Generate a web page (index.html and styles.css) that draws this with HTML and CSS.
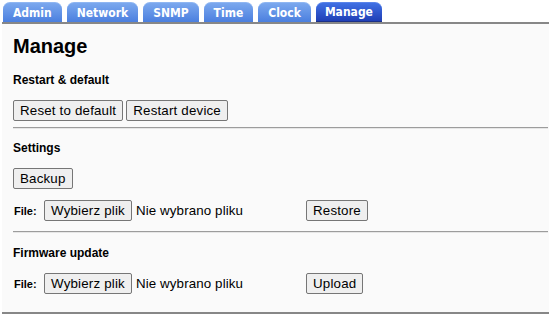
FILE: index.html
```html
<!DOCTYPE html>
<html lang="pl">
<head>
    <meta charset="UTF-8">
    <title>Manage</title>
    <link rel="stylesheet" href="styles.css">
</head>
<body>
    <ul class="tabs">
        <li class="tab">Admin</li>
        <li class="tab">Network</li>
        <li class="tab">SNMP</li>
        <li class="tab">Time</li>
        <li class="tab">Clock</li>
        <li class="tab active">Manage</li>
    </ul>

    <div class="panel">
        <h2>Manage</h2>

        <h3>Restart &amp; default</h3>
        <div class="row">
            <button type="button">Reset to default</button>
            <button type="button">Restart device</button>
        </div>
        <hr>

        <h3>Settings</h3>
        <div class="row">
            <button type="button">Backup</button>
        </div>
        <div class="row file-row">
            <span class="file-label">File:</span>
            <span class="file-field">
                <button type="button">Wybierz plik</button>
                <span class="file-name">Nie wybrano pliku</span>
            </span>
            <button type="button">Restore</button>
        </div>
        <hr class="hr-second">

        <h3 class="fw-title">Firmware update</h3>
        <div class="row file-row">
            <span class="file-label">File:</span>
            <span class="file-field">
                <button type="button">Wybierz plik</button>
                <span class="file-name">Nie wybrano pliku</span>
            </span>
            <button type="button">Upload</button>
        </div>
    </div>
</body>
</html>
```

FILE: styles.css
```css
body {
    margin: 0;
    background: #fff;
    font-family: "Liberation Sans", Arial, sans-serif;
    color: #000;
}
.tabs {
    display: flex;
    gap: 5px;
    list-style: none;
    margin: 2px 0 0 3px;
    padding: 0;
    height: 20px;
}
.tab {
    height: 19px;
    line-height: 20px;
    padding: 0 10px;
    border-radius: 7px 7px 0 0;
    border-top: 1px solid #8fb6f2;
    background: linear-gradient(#7ba8ee, #4b7fdf);
    color: #fff;
    font-family: "DejaVu Sans Condensed", "DejaVu Sans", sans-serif;
    font-weight: bold;
    font-size: 12px;
}
.tab.active {
    padding: 0 9px;
    border-top-color: #5a84ea;
    background: linear-gradient(#4070e4, #1f3fb6);
    border-bottom: 1px solid #1a2f86;
    height: 18px;
    line-height: 19px;
}
.panel {
    margin: 0 0 0 2px;
    width: 535px;
    height: 288px;
    padding: 0 9px 0 11px;
    border-top: 2px solid #878787;
    border-right: 2px solid #878787;
    border-bottom: 2px solid #878787;
    background: #fafafa;
}
h2 {
    margin: 0;
    padding-top: 11px;
    font-size: 20px;
    line-height: 23px;
}
h3 {
    margin: 15px 0 0;
    font-size: 12px;
    line-height: 14px;
}
.row {
    display: flex;
    align-items: center;
    gap: 3px;
    margin-top: 13px;
}
.file-row {
    gap: 0;
    margin-top: 11px;
}
button {
    height: 21px;
    padding: 0 6px;
    font-family: "Liberation Sans", Arial, sans-serif;
    font-size: 13.33px;
    letter-spacing: 0.18px;
    line-height: 19px;
    color: #000;
    background: #efefef;
    border: 1px solid #767676;
    border-radius: 2px;
}
hr {
    margin: 6px 0 0;
    height: 0;
    border: 0;
    border-top: 1px solid #9c9c9c;
    border-bottom: 1px solid #e6e6e6;
}
hr + h3 {
    margin-top: 12px;
}
.hr-second {
    margin-top: 10px;
}
.hr-second + h3 {
    margin-top: 13px;
}
.fw-title + .row {
    margin-top: 13px;
}
.file-label {
    font-size: 11px;
    font-weight: bold;
    padding-left: 1px;
    width: 30px;
}
.file-field {
    display: flex;
    align-items: center;
    width: 258px;
    margin-right: 4px;
}
.file-name {
    margin-left: 4px;
    font-size: 13.33px;
    letter-spacing: 0.12px;
}
```
